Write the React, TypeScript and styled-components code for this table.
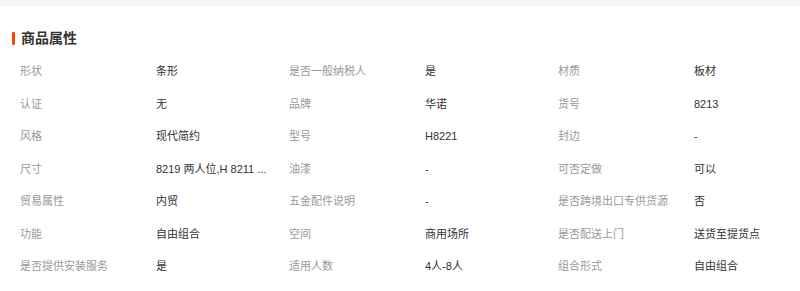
import React from 'react'
import styled, { createGlobalStyle } from 'styled-components'

const GlobalStyle = createGlobalStyle`
    html, body {
        margin: 0;
        padding: 0;
        background: #fff;
        font-family: "Liberation Sans", "Noto Sans CJK SC", sans-serif;
    }
`

const TopStrip = styled.div`
    height: 6px;
    background: #f5f5f5;
`

const Section = styled.section`
    padding: 24px 0 0 20px;
`

const Title = styled.h3`
    position: relative;
    margin: 0;
    font-size: 14px;
    line-height: 16px;
    font-weight: bold;
    color: #333;
    padding-left: 1px;
    &::before {
        content: '';
        position: absolute;
        left: -8px;
        top: 2px;
        width: 3px;
        height: 13px;
        background: #ff4400;
        border-radius: 1px;
    }
`

const Grid = styled.div`
    display: grid;
    grid-template-columns: repeat(3, 136px 133px);
    margin-top: 9px;
    width: 820px;
`

const Cell = styled.div<{ $label?: boolean }>`
    height: 32.5px;
    line-height: 32.5px;
    font-size: 11px;
    color: ${p => (p.$label ? '#999' : '#333')};
    white-space: nowrap;
    overflow: hidden;
`

const rows: [string, string][][] = [
    [['形状', '条形'], ['是否一般纳税人', '是'], ['材质', '板材']],
    [['认证', '无'], ['品牌', '华诺'], ['货号', '8213']],
    [['风格', '现代简约'], ['型号', 'H8221'], ['封边', '-']],
    [['尺寸', '8219 两人位,H 8211 ...'], ['油漆', '-'], ['可否定做', '可以']],
    [['贸易属性', '内贸'], ['五金配件说明', '-'], ['是否跨境出口专供货源', '否']],
    [['功能', '自由组合'], ['空间', '商用场所'], ['是否配送上门', '送货至提货点']],
    [['是否提供安装服务', '是'], ['适用人数', '4人-8人'], ['组合形式', '自由组合']],
]

export default function App() {
    return (
        <>
            <GlobalStyle />
            <TopStrip />
            <Section>
                <Title>商品属性</Title>
                <Grid>
                    {rows.map((row, i) =>
                        row.map(([k, v], j) => (
                            <React.Fragment key={i + '-' + j}>
                                <Cell $label>{k}</Cell>
                                <Cell>{v}</Cell>
                            </React.Fragment>
                        ))
                    )}
                </Grid>
            </Section>
        </>
    )
}
